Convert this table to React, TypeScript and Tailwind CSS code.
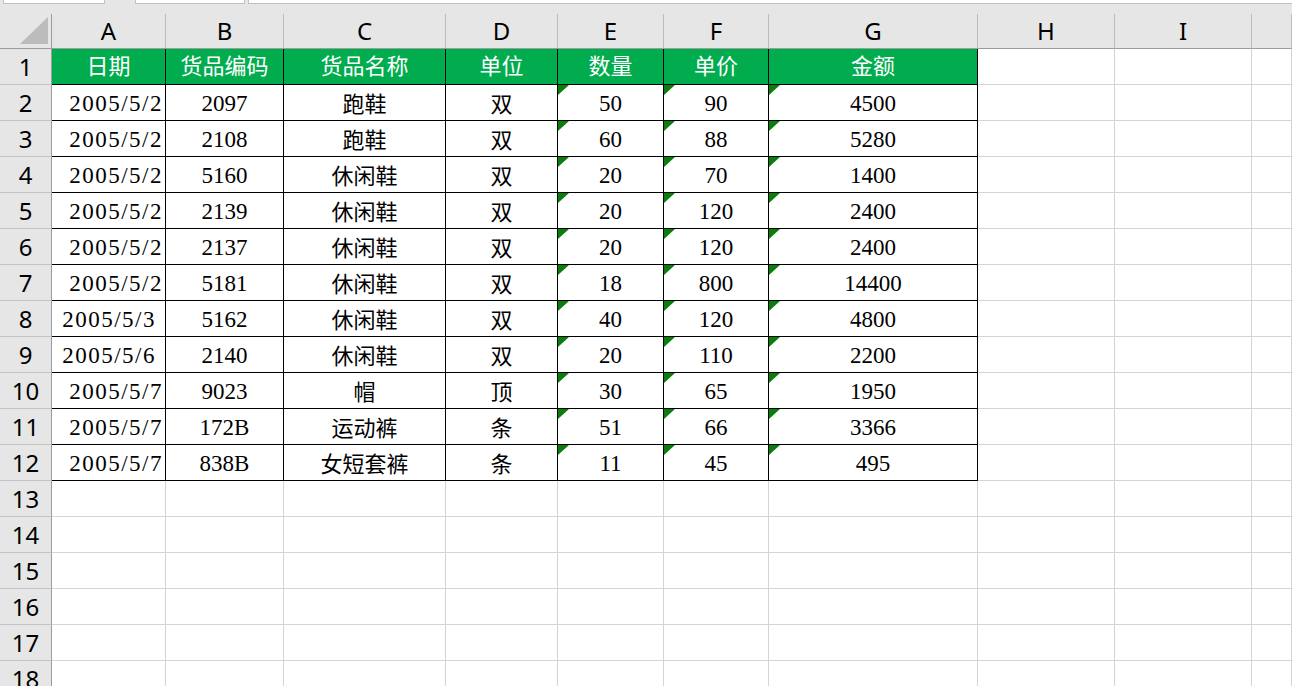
import { Fragment } from 'react';

const COLS = ['A', 'B', 'C', 'D', 'E', 'F', 'G', 'H', 'I', ''];

const HEAD = ['日期', '货品编码', '货品名称', '单位', '数量', '单价', '金额'];

const ROWS: string[][] = [
  ['2005/5/2', '2097', '跑鞋', '双', '50', '90', '4500'],
  ['2005/5/2', '2108', '跑鞋', '双', '60', '88', '5280'],
  ['2005/5/2', '5160', '休闲鞋', '双', '20', '70', '1400'],
  ['2005/5/2', '2139', '休闲鞋', '双', '20', '120', '2400'],
  ['2005/5/2', '2137', '休闲鞋', '双', '20', '120', '2400'],
  ['2005/5/2', '5181', '休闲鞋', '双', '18', '800', '14400'],
  ['2005/5/3', '5162', '休闲鞋', '双', '40', '120', '4800'],
  ['2005/5/6', '2140', '休闲鞋', '双', '20', '110', '2200'],
  ['2005/5/7', '9023', '帽', '顶', '30', '65', '1950'],
  ['2005/5/7', '172B', '运动裤', '条', '51', '66', '3366'],
  ['2005/5/7', '838B', '女短套裤', '条', '11', '45', '495'],
];

const serif = "font-['Liberation_Serif','Noto_Sans_CJK_SC',serif]";
const sans = "font-['Noto_Sans','Liberation_Sans',sans-serif]";

function RowHead({ n }: { n: number }) {
  return (
    <div className={`h-[36px] bg-[#e6e6e6] border-r border-r-[#9c9c9c] border-b border-b-[#c4c4c4] flex items-center justify-center text-[24px] text-black ${sans}`}>
      {n}
    </div>
  );
}

function Empty() {
  return <div className="h-[36px] bg-white border-r border-b border-[#d4d4d4]" />;
}

function Tri() {
  return (
    <svg className="absolute top-0 left-0" width="11" height="10" viewBox="0 0 11 10">
      <polygon points="0,0 11,0 0,10" fill="#0b7d0b" />
    </svg>
  );
}

export default function App() {
  return (
    <div className="w-[1292px] h-[686px] overflow-hidden bg-[#e6e6e6]">
      {/* tab strip */}
      <div className="flex h-[4px]">
        <div className="ml-[3px] w-[102px] bg-white border-x border-b border-[#c0c0c0]" />
        <div className="ml-[30px] w-[110px] bg-white border-x border-b border-[#c0c0c0]" />
        <div className="ml-[3px] flex-1 bg-white border-l border-b border-[#c0c0c0]" />
      </div>
      <div className="h-[10px]" />

      <div className="grid grid-cols-[52px_114px_118px_162px_112px_106px_105px_209px_137px_137px_40px]">
        {/* column header */}
        <div className="h-[35px] border-r border-b border-[#9c9c9c] relative">
          <svg className="absolute top-0 left-0" width="52" height="35" viewBox="0 0 52 35">
            <polygon points="48,3 48,30 20,30" fill="#bcbcbc" />
          </svg>
        </div>
        {COLS.map((c, i) => (
          <div
            key={i}
            className={`h-[35px] border-r border-r-[#bcbcbc] border-b border-b-[#9c9c9c] flex items-center justify-center text-[24px] text-black ${sans}`}
          >
            {c}
          </div>
        ))}

        {/* title row */}
        <RowHead n={1} />
        {HEAD.map((h, i) => (
          <div
            key={i}
            className={`h-[36px] bg-[#00ac4e] border-r border-b border-black flex items-center justify-center text-[22px] text-white ${serif}`}
          >
            {h}
          </div>
        ))}
        <Empty />
        <Empty />
        <Empty />

        {/* data */}
        {ROWS.map((r, ri) => (
          <Fragment key={ri}>
            <RowHead n={ri + 2} />
            {r.map((v, ci) => (
              <div
                key={ci}
                className={`relative h-[36px] bg-white border-r border-b border-black flex items-center pt-[3px] ${
                  ci === 2 || ci === 3 ? 'text-[22px]' : 'text-[23px]'
                } text-black ${serif} ${
                  ci === 0
                    ? ri === 6 || ri === 7
                      ? 'justify-end pr-[9px] tracking-[1.5px]'
                      : 'justify-end pr-[2px] tracking-[1.5px]'
                    : 'justify-center'
                }`}
              >
                {ci >= 4 && <Tri />}
                {v}
              </div>
            ))}
            <Empty />
            <Empty />
            <Empty />
          </Fragment>
        ))}

        {/* empty rows */}
        {[13, 14, 15, 16, 17, 18].map(n => (
          <Fragment key={n}>
            <RowHead n={n} />
            {COLS.map((_, i) => (
              <Empty key={i} />
            ))}
          </Fragment>
        ))}
      </div>
    </div>
  );
}
